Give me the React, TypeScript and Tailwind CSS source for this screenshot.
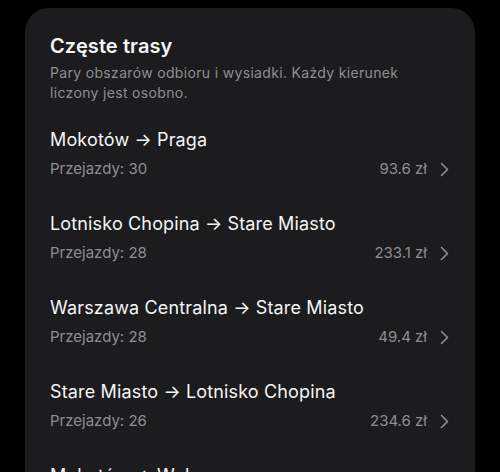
import React from "react";

const routes = [
  { name: "Mokotów → Praga", count: 30, price: "93.6 zł" },
  { name: "Lotnisko Chopina → Stare Miasto", count: 28, price: "233.1 zł" },
  { name: "Warszawa Centralna → Stare Miasto", count: 28, price: "49.4 zł" },
  { name: "Stare Miasto → Lotnisko Chopina", count: 26, price: "234.6 zł" },
  { name: "Mokotów → Wola", count: 25, price: "61.2 zł" },
];

export default function App() {
  return (
    <div
      className="w-[500px] h-[472px] bg-black overflow-hidden pt-2 px-[25px]"
      style={{ fontFamily: "Inter, 'Noto Sans', sans-serif" }}
    >
      <div className="bg-[#1c1c1e] rounded-[24px] pl-[25px] pr-[26px] pt-6 h-[600px]">
        <div className="text-[20px] leading-[28px] font-semibold text-[#f5f5f5] tracking-[0.1px]">Częste trasy</div>
        <div className="mt-[3px] text-[14px] leading-[20px] text-[#8e8e93] tracking-[0.33px]">
          Pary obszarów odbioru i wysiadki. Każdy kierunek
          <br />
          liczony jest osobno.
        </div>
        <div className="mt-[9px] flex flex-col">
          {routes.map((r) => (
            <div key={r.name} className="pt-4 pb-[17px] flex flex-col gap-[7px]">
              <div className="text-[18px] leading-[24px] text-[#f5f5f5] tracking-[0.15px]">{r.name}</div>
              <div className="flex items-center justify-between text-[15px] leading-[20px] text-[#8e8e93]">
                <span>Przejazdy: {r.count}</span>
                <div className="flex items-center gap-[13px]">
                  <span>{r.price}</span>
                  <svg width="9" height="15" viewBox="0 0 9 15" fill="none">
                    <path d="M1.5 1.5l6 6-6 6" stroke="#8e8e93" strokeWidth="1.6" strokeLinecap="round" strokeLinejoin="round" />
                  </svg>
                </div>
              </div>
            </div>
          ))}
        </div>
      </div>
    </div>
  );
}
